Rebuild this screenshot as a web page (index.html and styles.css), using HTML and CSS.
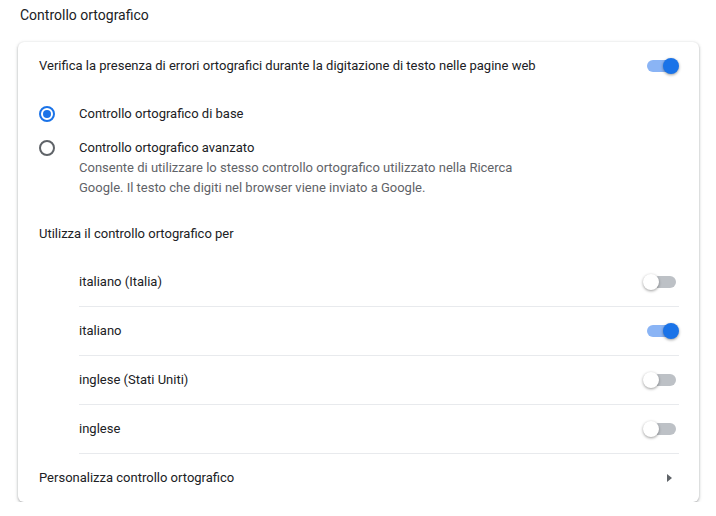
FILE: index.html
```html
<!DOCTYPE html>
<html lang="it">
<head>
    <meta charset="UTF-8">
    <title>Controllo ortografico</title>
    <link rel="stylesheet" href="styles.css">
</head>
<body>
    <div class="page">
        <h2 class="section-title">Controllo ortografico</h2>
        <div class="card">
            <div class="row">
                <span class="label">Verifica la presenza di errori ortografici durante la digitazione di testo nelle pagine web</span>
                <span class="toggle on"><span class="bar"></span><span class="knob"></span></span>
            </div>

            <div class="radio-row">
                <span class="radio checked"></span>
                <span class="label">Controllo ortografico di base</span>
            </div>
            <div class="radio-row multi">
                <span class="radio"></span>
                <div>
                    <div class="label">Controllo ortografico avanzato</div>
                    <div class="secondary">Consente di utilizzare lo stesso controllo ortografico utilizzato nella Ricerca Google. Il testo che digiti nel browser viene inviato a Google.</div>
                </div>
            </div>

            <div class="row subhead">
                <span class="label">Utilizza il controllo ortografico per</span>
            </div>
            <div class="lang-list">
                <div class="lang-row">
                    <span class="label">italiano (Italia)</span>
                    <span class="toggle"><span class="bar"></span><span class="knob"></span></span>
                </div>
                <div class="lang-row">
                    <span class="label">italiano</span>
                    <span class="toggle on"><span class="bar"></span><span class="knob"></span></span>
                </div>
                <div class="lang-row">
                    <span class="label">inglese (Stati Uniti)</span>
                    <span class="toggle"><span class="bar"></span><span class="knob"></span></span>
                </div>
                <div class="lang-row">
                    <span class="label">inglese</span>
                    <span class="toggle"><span class="bar"></span><span class="knob"></span></span>
                </div>
            </div>

            <div class="row link-row">
                <span class="label">Personalizza controllo ortografico</span>
                <span class="arrow"></span>
            </div>
        </div>
    </div>
</body>
</html>
```

FILE: styles.css
```css
body { margin: 0; background: #fff; font-family: Roboto, "Liberation Sans", sans-serif; font-size: 13px; color: #202124; }
.page { padding: 5px 17px 0 18px; }
.section-title { margin: 0 0 17px 2px; font-size: 14px; font-weight: 400; line-height: 20px; color: #202124; }
.card { background: #fff; border-radius: 6px; padding: 0 20px 0 21px; box-shadow: 0 1px 2px 0 rgba(60, 64, 67, 0.3), 0 1px 3px 1px rgba(60, 64, 67, 0.15); }
.row { display: flex; align-items: center; justify-content: space-between; min-height: 48px; }
.row.subhead { min-height: 49px; }
.label { line-height: 20px; }
.secondary { color: #5f6368; line-height: 20px; max-width: 450px; }

.radio-row { display: flex; align-items: center; gap: 24px; min-height: 48px; }
.radio-row.multi { align-items: flex-start; min-height: 0; padding-bottom: 11px; }
.radio-row.multi .radio { margin-top: 2px; }
.radio { width: 12px; height: 12px; border: 2px solid #5f6368; border-radius: 50%; flex: none; position: relative; }
.radio.checked { border-color: #1a73e8; }
.radio.checked::after { content: ""; position: absolute; left: 2px; top: 2px; width: 8px; height: 8px; border-radius: 50%; background: #1a73e8; }

.lang-list { padding-left: 40px; }
.lang-row { display: flex; align-items: center; justify-content: space-between; height: 48px; border-bottom: 1px solid #e8eaed; }

.toggle { position: relative; width: 36px; height: 16px; flex: none; }
.toggle .bar { position: absolute; left: 4px; right: 3px; top: 2px; height: 12px; border-radius: 6px; background: #bdc1c6; }
.toggle .knob { position: absolute; left: 0; top: 0; width: 16px; height: 16px; border-radius: 50%; background: #fff; box-shadow: 0 1px 3px rgba(0, 0, 0, 0.4); }
.toggle.on .bar { background: #8ab4f5; }
.toggle.on .knob { left: auto; right: 0; background: #1a73e8; }

.link-row { min-height: 48px; }
.arrow { width: 0; height: 0; margin-right: 7px; border-left: 5px solid #5f6368; border-top: 4px solid transparent; border-bottom: 4px solid transparent; }
```
